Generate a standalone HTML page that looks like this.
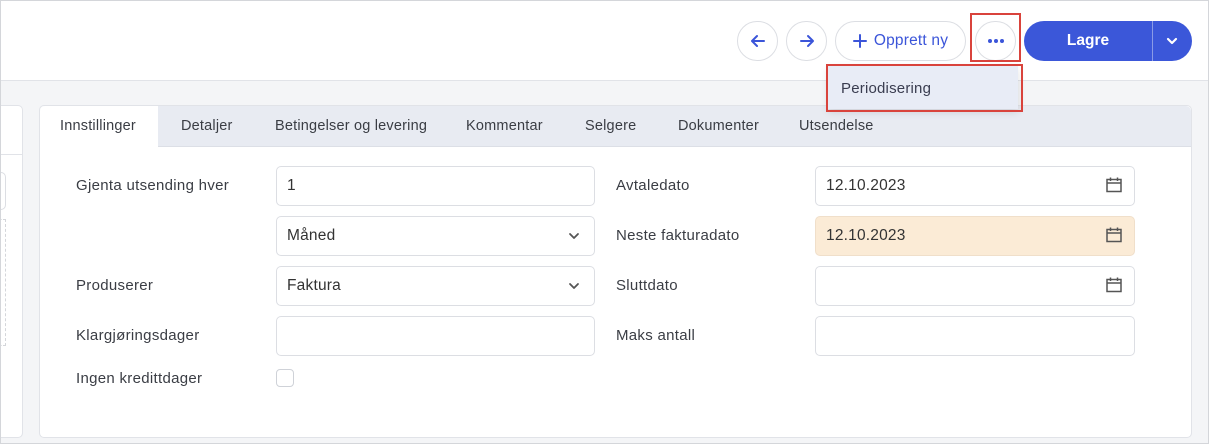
<!DOCTYPE html>
<html><head><meta charset="utf-8"><style>
*{box-sizing:border-box;margin:0;padding:0}
body{width:1209px;height:444px;overflow:hidden;background:#f4f5f7;font-family:"Liberation Sans",sans-serif;color:#333;position:relative;font-size:14.5px}
.a{position:absolute}
.frame{left:0;top:0;width:1209px;height:444px;border:1px solid #d4d6da;pointer-events:none}
.hdr{left:0;top:0;width:1209px;height:81px;background:#fff;border-bottom:1px solid #e1e3e8}
.circ{border:1px solid #dcdee3;border-radius:20px;background:#fff;height:40px;top:21px;display:flex;align-items:center;justify-content:center;color:#3b55d9}
.panel{background:#fff;border:1px solid #e1e3e8;border-radius:5px}
.tabs{left:40px;top:106px;width:1151px;height:41px;background:#e8ebf2;border-bottom:1px solid #dcdfe6;border-radius:5px 5px 0 0}
.tab{top:106px;height:41px;line-height:41px;color:#3a3d44;font-size:14.5px;letter-spacing:0.2px}
.lbl{font-size:15px;letter-spacing:0.3px;color:#3a3d44;line-height:18px}
.inp{height:40px;border:1px solid #dcdee3;border-radius:5px;background:#fff;padding-left:10px;line-height:38px;font-size:15.5px;color:#333;letter-spacing:0.2px}
</style></head><body>
<div class="a hdr"></div>
<div class="a circ" style="left:737px;width:41px"><svg width="18" height="18" viewBox="0 0 18 18" fill="none" stroke="#3b55d9" stroke-width="2" stroke-linecap="round" stroke-linejoin="round"><path d="M15 9H3M8 4L3 9l5 5"/></svg></div>
<div class="a circ" style="left:786px;width:41px"><svg width="18" height="18" viewBox="0 0 18 18" fill="none" stroke="#3b55d9" stroke-width="2" stroke-linecap="round" stroke-linejoin="round"><path d="M3 9h12M10 4l5 5-5 5"/></svg></div>
<div class="a circ" style="left:835px;width:131px;font-size:15.5px;letter-spacing:0.2px"><svg width="14" height="14" viewBox="0 0 14 14" style="margin-right:7px" stroke="#3b55d9" stroke-width="2" stroke-linecap="round"><path d="M7 1v12M1 7h12"/></svg>Opprett ny</div>
<div class="a circ" style="left:975px;width:41px"><svg width="16" height="4"><circle cx="2" cy="2" r="2" fill="#3b55d9"/><circle cx="8" cy="2" r="2" fill="#3b55d9"/><circle cx="14" cy="2" r="2" fill="#3b55d9"/></svg></div>
<div class="a" style="left:970px;top:13px;width:51px;height:49px;border:2px solid #d9433c"></div>
<div class="a" style="left:1024px;top:21px;width:168px;height:40px;background:#3b57d9;border-radius:20px;color:#fff;font-weight:bold;font-size:15.5px">
<div class="a" style="left:0;top:0;width:128px;height:40px;display:flex;align-items:center;justify-content:center">Lagre</div>
<div class="a" style="left:128px;top:0;width:1px;height:40px;background:#8a9be6"></div>
<svg class="a" style="left:141px;top:13px" width="14" height="14" viewBox="0 0 14 14" fill="none" stroke="#fff" stroke-width="2.2" stroke-linecap="round" stroke-linejoin="round"><path d="M3 5l4 4 4-4"/></svg>
</div>
<!-- left panel -->
<div class="a panel" style="left:-6px;top:105px;width:29px;height:333px"></div>
<div class="a" style="left:0;top:154px;width:22px;height:1px;background:#e1e3e8"></div>
<div class="a" style="left:-10px;top:172px;width:16px;height:38px;border:1px solid #dcdee3;border-radius:5px"></div>
<div class="a" style="left:-10px;top:219px;width:16px;height:127px;border:1px dashed #d4d6da"></div>
<!-- main panel -->
<div class="a panel" style="left:39px;top:105px;width:1153px;height:333px"></div>
<div class="a tabs"></div>
<div class="a" style="left:40px;top:106px;width:118px;height:42px;background:#fff;border-radius:5px 0 0 0"></div>
<div class="a tab" style="left:60px">Innstillinger</div>
<div class="a tab" style="left:181px">Detaljer</div>
<div class="a tab" style="left:275px">Betingelser og levering</div>
<div class="a tab" style="left:466px">Kommentar</div>
<div class="a tab" style="left:585px">Selgere</div>
<div class="a tab" style="left:678px">Dokumenter</div>
<div class="a tab" style="left:799px">Utsendelse</div>
<!-- dropdown -->
<div class="a" style="left:828px;top:66px;width:190px;height:43px;background:#e8ecf6;box-shadow:0 3px 8px rgba(0,0,0,.12)"></div>
<div class="a" style="left:826px;top:64px;width:197px;height:48px;border:2px solid #d9433c"></div>
<div class="a" style="left:841px;top:80px;font-size:15px;letter-spacing:0.2px;color:#3a3d50">Periodisering</div>
<!-- form -->
<div class="a lbl" style="left:76px;top:177px">Gjenta utsending hver</div>
<div class="a lbl" style="left:76px;top:277px">Produserer</div>
<div class="a lbl" style="left:76px;top:327px">Klargjøringsdager</div>
<div class="a lbl" style="left:76px;top:370px">Ingen kredittdager</div>
<div class="a inp" style="left:276px;top:166px;width:319px">1</div>
<div class="a inp" style="left:276px;top:216px;width:319px">Måned</div>
<div class="a inp" style="left:276px;top:266px;width:319px">Faktura</div>
<div class="a inp" style="left:276px;top:316px;width:319px"></div>
<svg class="a" style="left:567px;top:230px" width="14" height="12" viewBox="0 0 14 12" fill="none" stroke="#555" stroke-width="1.8" stroke-linecap="round" stroke-linejoin="round"><path d="M3 4l4 4 4-4"/></svg>
<svg class="a" style="left:567px;top:280px" width="14" height="12" viewBox="0 0 14 12" fill="none" stroke="#555" stroke-width="1.8" stroke-linecap="round" stroke-linejoin="round"><path d="M3 4l4 4 4-4"/></svg>
<div class="a" style="left:276px;top:369px;width:18px;height:18px;border:1px solid #cfd2d8;border-radius:4px;background:#fff"></div>
<div class="a lbl" style="left:616px;top:177px">Avtaledato</div>
<div class="a lbl" style="left:616px;top:227px">Neste fakturadato</div>
<div class="a lbl" style="left:616px;top:277px">Sluttdato</div>
<div class="a lbl" style="left:616px;top:327px">Maks antall</div>
<div class="a inp" style="left:815px;top:166px;width:320px">12.10.2023</div>
<div class="a inp" style="left:815px;top:216px;width:320px;background:#fbebd6;border-color:#f0dfca">12.10.2023</div>
<div class="a inp" style="left:815px;top:266px;width:320px"></div>
<div class="a inp" style="left:815px;top:316px;width:320px"></div>
<svg class="a" style="left:1105px;top:176px" width="18" height="18" viewBox="0 0 18 18" fill="none" stroke="#555" stroke-width="1.5"><rect x="2" y="3.5" width="14" height="12"/><path d="M2 7h14M5.5 1.5v3.5M12.5 1.5v3.5"/></svg>
<svg class="a" style="left:1105px;top:226px" width="18" height="18" viewBox="0 0 18 18" fill="none" stroke="#555" stroke-width="1.5"><rect x="2" y="3.5" width="14" height="12"/><path d="M2 7h14M5.5 1.5v3.5M12.5 1.5v3.5"/></svg>
<svg class="a" style="left:1105px;top:276px" width="18" height="18" viewBox="0 0 18 18" fill="none" stroke="#555" stroke-width="1.5"><rect x="2" y="3.5" width="14" height="12"/><path d="M2 7h14M5.5 1.5v3.5M12.5 1.5v3.5"/></svg>
<div class="a frame"></div>
</body></html>
